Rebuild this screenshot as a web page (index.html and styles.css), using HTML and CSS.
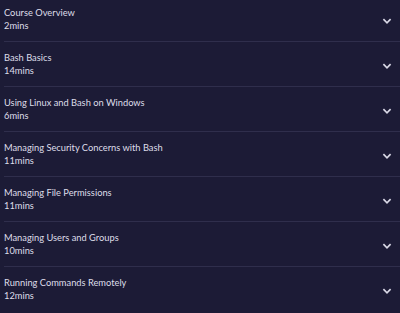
FILE: index.html
```html
<!DOCTYPE html>
<html lang="en">
<head>
  <meta charset="UTF-8" />
  <meta name="viewport" content="width=device-width, initial-scale=1" />
  <title>Course Contents</title>
  <link rel="stylesheet" href="styles.css">
</head>
<body>

  <ul class="modules">
    <li class="module">
      <div class="module-text">
        <div class="module-title">Course Overview</div>
        <div class="module-time">2mins</div>
      </div>
      <svg class="chevron" viewBox="0 0 8 5"><path d="M1 1 L4 4 L7 1" /></svg>
    </li>
    <li class="module">
      <div class="module-text">
        <div class="module-title">Bash Basics</div>
        <div class="module-time">14mins</div>
      </div>
      <svg class="chevron" viewBox="0 0 8 5"><path d="M1 1 L4 4 L7 1" /></svg>
    </li>
    <li class="module">
      <div class="module-text">
        <div class="module-title">Using Linux and Bash on Windows</div>
        <div class="module-time">6mins</div>
      </div>
      <svg class="chevron" viewBox="0 0 8 5"><path d="M1 1 L4 4 L7 1" /></svg>
    </li>
    <li class="module">
      <div class="module-text">
        <div class="module-title">Managing Security Concerns with Bash</div>
        <div class="module-time">11mins</div>
      </div>
      <svg class="chevron" viewBox="0 0 8 5"><path d="M1 1 L4 4 L7 1" /></svg>
    </li>
    <li class="module">
      <div class="module-text">
        <div class="module-title">Managing File Permissions</div>
        <div class="module-time">11mins</div>
      </div>
      <svg class="chevron" viewBox="0 0 8 5"><path d="M1 1 L4 4 L7 1" /></svg>
    </li>
    <li class="module">
      <div class="module-text">
        <div class="module-title">Managing Users and Groups</div>
        <div class="module-time">10mins</div>
      </div>
      <svg class="chevron" viewBox="0 0 8 5"><path d="M1 1 L4 4 L7 1" /></svg>
    </li>
    <li class="module">
      <div class="module-text">
        <div class="module-title">Running Commands Remotely</div>
        <div class="module-time">12mins</div>
      </div>
      <svg class="chevron" viewBox="0 0 8 5"><path d="M1 1 L4 4 L7 1" /></svg>
    </li>
  </ul>

</body>
</html>
```

FILE: styles.css
```css
body {
  margin: 0;
  background: #1c1b36;
  color: #dedde9;
  font-family: 'Lato', 'Liberation Sans', sans-serif;
  overflow: hidden;
}

.modules {
  list-style: none;
  margin: -3px 0 0 4px;
  padding: 0;
}

.module {
  display: flex; align-items: center;
  height: 44px;
  padding-right: 8px;
  border-bottom: 1px solid #2f2e4c;
}
.module:last-child { border-bottom: none; }

.module-text { flex: 1; padding-top: 1px; }
.module-title { font-size: 9.3px; line-height: 12px; }
.module-time { font-size: 9.3px; line-height: 13px; }

.chevron {
  width: 10px; height: 6px;
  margin-top: 3px;
  fill: none; stroke: #d9d8e6; stroke-width: 1.4;
}
```
